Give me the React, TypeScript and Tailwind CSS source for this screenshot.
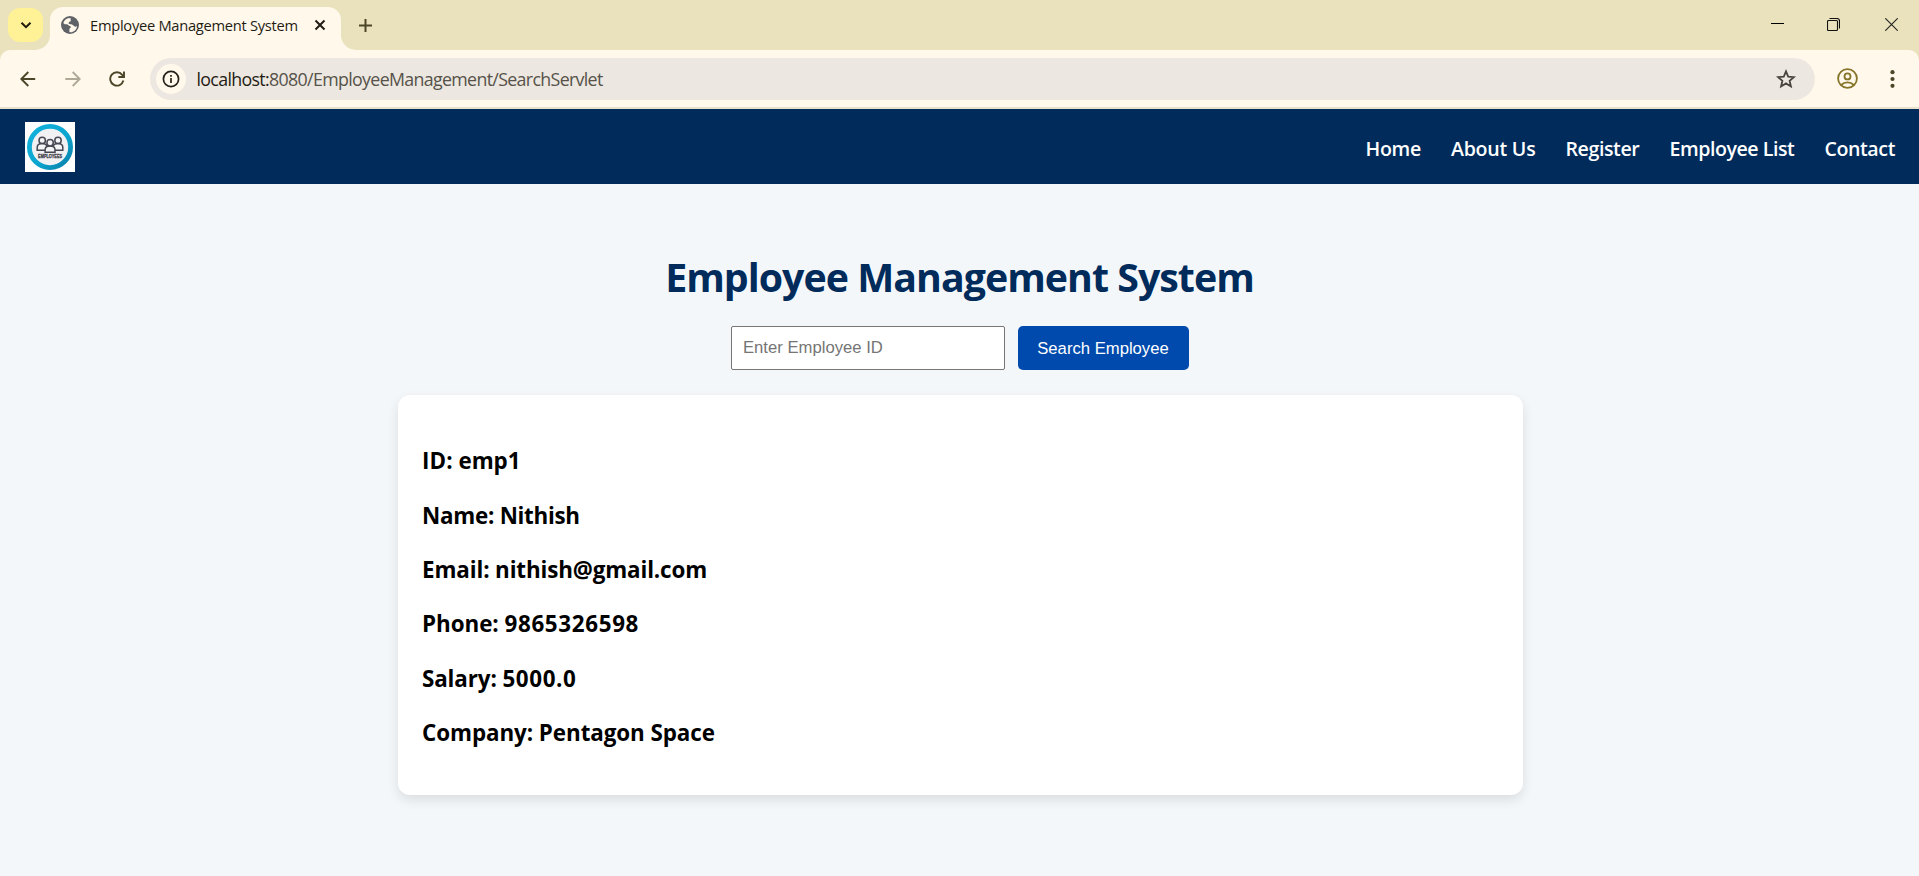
import React from "react";

const navLinks = [
  { label: "Home", cls: "tracking-[-0.3px]" },
  { label: "About Us", cls: "tracking-[-0.25px]" },
  { label: "Register", cls: "tracking-[-0.4px]" },
  { label: "Employee List", cls: "tracking-[-0.45px]" },
  { label: "Contact", cls: "tracking-[-0.4px]" },
];

const details = [
  { label: "ID", value: "emp1", labelCls: "tracking-[0.1px]", valueCls: "tracking-[-0.1px]" },
  { label: "Name", value: "Nithish", labelCls: "tracking-[-0.25px]", valueCls: "tracking-[-0.3px]" },
  { label: "Email", value: "nithish@gmail.com", labelCls: "tracking-[-0.12px]", valueCls: "tracking-[-0.14px]" },
  { label: "Phone", value: "9865326598", labelCls: "tracking-[-0.05px]", valueCls: "tracking-[0.66px]" },
  { label: "Salary", value: "5000.0", labelCls: "tracking-[-0.12px]", valueCls: "tracking-[0.62px]" },
  { label: "Company", value: "Pentagon Space", labelCls: "tracking-[-0.07px]", valueCls: "tracking-[-0.07px]" },
];

function GlobeIcon() {
  return (
    <svg className="ml-[11px] size-[18px] shrink-0" viewBox="0 0 18 18">
      <circle cx="9" cy="9" r="9" fill="#5f6368" />
      <path
        d="M9.6 2C6.2 1.9 3.2 3.9 2.3 6.9 3.4 8.2 4.4 8.3 5.8 8.3 7 8.3 7.2 9.2 8 9.8 8.9 10.4 9.8 10 9.9 11 10 12 8.6 11.9 8.4 13.1 8.2 14.3 8.9 15.6 8.2 16.1 12.4 16.6 15.8 13.8 16.1 9.9 15 11 13.9 10.8 13 10.1 12 9.3 11.5 8.5 10.2 8.3 8.9 8.1 7.6 8 7.6 6.9 7.6 5.8 9.2 5.9 9.7 5 10.2 4.1 9.2 3.2 9.6 2Z"
        fill="#fff8eb"
      />
    </svg>
  );
}

function TabStrip() {
  return (
    <div className="flex h-[50px] bg-[#eae2bd]">
      <button className="mt-2 ml-2 flex h-[34px] w-[35px] items-center justify-center rounded-[12px] bg-[#fff195]">
        <svg className="size-[12px]" viewBox="0 0 12 12" fill="none" stroke="#1f1c0f" strokeWidth="2">
          <path d="M1.5 3.8 6 8.2 10.5 3.8" />
        </svg>
      </button>
      <div className="relative mt-[7px] ml-[7px] flex h-[43px] w-[291px] items-center rounded-t-[13px] bg-[#fff8eb] pb-[7px]">
        <svg className="absolute bottom-0 -left-[15px] size-[15px]" viewBox="0 0 15 15">
          <path d="M15 0V15H0A15 15 0 0 0 15 0Z" fill="#fff8eb" />
        </svg>
        <svg className="absolute -right-[15px] bottom-0 size-[15px]" viewBox="0 0 15 15">
          <path d="M0 0V15H15A15 15 0 0 1 0 0Z" fill="#fff8eb" />
        </svg>
        <GlobeIcon />
        <span className="ml-[11px] w-[224px] shrink-0 text-[14.7px] leading-5 tracking-[-0.28px] whitespace-nowrap text-[#1f1c14]">
          Employee Management System
        </span>
        <svg className="size-[12px] shrink-0" viewBox="0 0 12 12" stroke="#1f1c14" strokeWidth="2">
          <path d="M1.5 1.5 10.5 10.5M10.5 1.5 1.5 10.5" />
        </svg>
      </div>
      <svg className="mt-[18.5px] ml-[18px] size-[13px]" viewBox="0 0 13 13" stroke="#4b4628" strokeWidth="2">
        <path d="M6.5 0V13M0 6.5H13" />
      </svg>
      <div className="mt-[18px] mr-[21px] ml-auto flex h-[13px] items-center">
        <svg className="h-[13px] w-[13px]" viewBox="0 0 13 13">
          <path d="M0 5.5H13" stroke="#000" />
        </svg>
        <svg className="ml-[43px] size-[13px]" viewBox="0 0 13 13" fill="none" stroke="#111" strokeWidth="1.1">
          <rect x=".5" y="2.5" width="10" height="10" rx="1" />
          <path d="M2.5.5H10A2.5 2.5 0 0 1 12.5 3V10.5" />
        </svg>
        <svg className="ml-[45px] size-[13px]" viewBox="0 0 13 13" stroke="#222" strokeWidth="1.1">
          <path d="M.3.3 12.7 12.7M12.7.3.3 12.7" />
        </svg>
      </div>
    </div>
  );
}

function Toolbar() {
  return (
    <div className="bg-[#eae2bd]">
      <div className="flex h-[57px] items-center rounded-t-[10px] bg-[#fff8eb]">
        <svg className="ml-5 size-[16px]" viewBox="0 0 16 16" fill="none" stroke="#4b4628" strokeWidth="1.9">
          <path d="M15.2 8H1.8M8.3 1 1.3 8 8.3 15" />
        </svg>
        <svg className="ml-[29px] size-[16px]" viewBox="0 0 16 16" fill="none" stroke="#aeaa97" strokeWidth="1.9">
          <path d="M.3 8H14.2M7.7 1 14.7 8 7.7 15" />
        </svg>
        <svg className="ml-[28px] size-[16px]" viewBox="0 0 16 16" fill="none" stroke="#4b4628" strokeWidth="1.9">
          <path d="M14.4 9.6A6.7 6.7 0 1 1 13.2 3.8L14.2 5.2M15 .5V6H9.4" />
        </svg>
        <div className="ml-[25px] flex h-[42px] w-[1665px] items-center rounded-full bg-[#ece7e0]">
          <span className="ml-[6px] flex size-[30px] items-center justify-center rounded-full bg-[#fff8eb]">
            <svg className="size-[18px]" viewBox="0 0 18 18" fill="none" stroke="#24211a" strokeWidth="1.7">
              <circle cx="9" cy="9" r="7.6" />
              <path d="M9 8V13M9 5V6.8" />
            </svg>
          </span>
          <span className="ml-[10.5px] text-[17.8px] leading-6 tracking-[-0.66px] whitespace-nowrap text-[#56524a]">
            <span className="text-[#1f1c14]">localhost:</span>8080/EmployeeManagement/SearchServlet
          </span>
          <svg className="mr-[19.5px] ml-auto size-[20px]" viewBox="0 0 20 20" fill="none" stroke="#48453c" strokeWidth="1.8">
            <path d="M10 2.4 12.2 7.6 17.9 8.1 13.6 11.8 14.9 17.4 10 14.4 5.1 17.4 6.4 11.8 2.1 8.1 7.8 7.6Z" />
          </svg>
        </div>
        <svg className="ml-[22px] size-[21px]" viewBox="0 0 21 21" fill="none" stroke="#857528" strokeWidth="1.8">
          <circle cx="10.5" cy="10.5" r="9.4" />
          <circle cx="10.5" cy="8.4" r="3" />
          <path d="M4.2 17C7.5 13.6 13.5 13.6 16.8 17" />
        </svg>
        <svg className="ml-[32px] h-[18px] w-[5px]" viewBox="0 0 5 18" fill="#4b4628">
          <circle cx="2.5" cy="2.2" r="2.1" />
          <circle cx="2.5" cy="9" r="2.1" />
          <circle cx="2.5" cy="15.8" r="2.1" />
        </svg>
      </div>
      <div className="h-[2px] bg-[#e7e1cb]" />
    </div>
  );
}

function Logo() {
  return (
    <svg className="size-[50px]" viewBox="0 0 50 50">
      <defs>
        <linearGradient id="ring" x1="0" y1="0" x2="1" y2="1">
          <stop offset="0" stopColor="#11b2dc" />
          <stop offset=".55" stopColor="#0ca6d0" />
          <stop offset="1" stopColor="#087fa8" />
        </linearGradient>
      </defs>
      <rect width="50" height="50" fill="#fff" />
      <circle cx="25" cy="25" r="20.6" fill="#f1f1f3" stroke="url(#ring)" strokeWidth="4.8" />
      <g fill="#f4f4f6" stroke="#454753" strokeWidth="1.5">
        <path d="M12.2 28.3V25.5C12.2 22.5 14.5 21.6 17.2 21.6S22 22.5 22 25.5V28.3Z" />
        <circle cx="17.2" cy="18.4" r="3.2" />
        <path d="M28 28.3V25.5C28 22.5 30.3 21.6 33 21.6S37.8 22.5 37.8 25.5V28.3Z" />
        <circle cx="33" cy="18.4" r="3.2" />
        <path d="M20.1 30.3V27.7C20.1 24.7 22.3 24 25.1 24S30 24.7 30 27.7V30.3Z" />
        <circle cx="25.1" cy="20.7" r="3.2" />
      </g>
      <text x="25.1" y="36" textAnchor="middle" textLength="24" lengthAdjust="spacingAndGlyphs" fontFamily="Liberation Sans, sans-serif" fontWeight="700" fontSize="5.4" fill="#3c3d47" stroke="#3c3d47" strokeWidth=".3">
        EMPLOYEES
      </text>
    </svg>
  );
}

export default function App() {
  return (
    <div className="flex h-screen flex-col overflow-hidden bg-[#f3f7fa] font-['Open_Sans','Noto_Sans',sans-serif]">
      <TabStrip />
      <Toolbar />
      <header className="flex h-[75px] shrink-0 items-center justify-between bg-[#002b5b] pr-6 pl-[25px]">
        <Logo />
        <nav className="flex gap-[30px] pt-1 text-[19.6px] leading-7 font-semibold text-white">
          {navLinks.map((link) => (
            <a key={link.label} className={link.cls}>
              {link.label}
            </a>
          ))}
        </nav>
      </header>
      <main className="flex flex-col items-center pt-[66px]">
        <h1 className="text-[39.3px] leading-[54px] font-bold tracking-[-0.97px] text-[#002b5b]">
          Employee Management System
        </h1>
        <form className="mt-[22px] flex gap-[13px] font-['Liberation_Sans',Arial,sans-serif] text-[16.67px]">
          <input
            className="h-[44px] w-[274px] rounded-[2px] border border-[#767676] bg-white px-[11.5px] placeholder:text-[#757575]"
            placeholder="Enter Employee ID"
          />
          <button type="button" className="h-[44px] w-[171px] rounded-[5px] bg-[#004aad] text-white">
            Search Employee
          </button>
        </form>
        <section className="mt-[25px] ml-[2px] flex h-[400px] w-[1125px] flex-col rounded-[12px] bg-white pt-[39.2px] pl-[24px] shadow-[0_5px_12px_rgba(0,0,0,0.1)]">
          {details.map((row) => (
            <h3 key={row.label} className="h-[54.4px] text-[22.4px] leading-[54.4px] font-bold text-black">
              <span className={row.labelCls}>{row.label}: </span>
              <span className={row.valueCls}>{row.value}</span>
            </h3>
          ))}
        </section>
      </main>
    </div>
  );
}
